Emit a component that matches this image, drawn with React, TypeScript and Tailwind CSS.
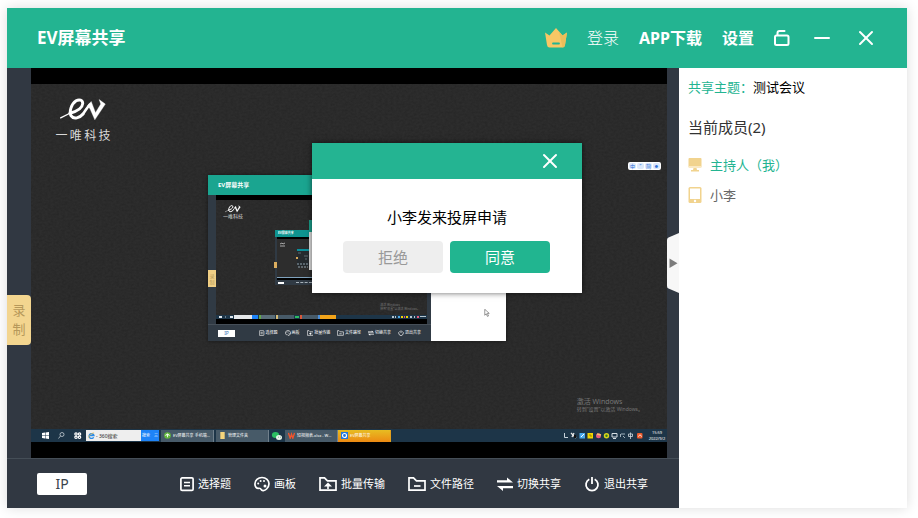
import React from 'react';
import { Minus, X } from 'lucide-react';
import clsx from 'clsx';

interface IconProps {
  className?: string;
}

interface Tool {
  label: string;
  icon: (props: IconProps) => React.ReactElement;
}

const tools: Tool[] = [
  { label: '选择题', icon: QuizIcon },
  { label: '画板', icon: PaletteIcon },
  { label: '批量传输', icon: FolderUpIcon },
  { label: '文件路径', icon: FolderPathIcon },
  { label: '切换共享', icon: SwapIcon },
  { label: '退出共享', icon: PowerIcon },
];

export default function App() {
  return (
    <div className="flex min-h-screen bg-white pt-2 pr-[11px] pb-[10px] pl-[7px] font-['Noto_Sans','Noto_Sans_CJK_SC',sans-serif]">
      <div className="flex min-w-0 flex-1 flex-col shadow-[0_0_12px_rgba(0,0,0,0.14)]">
        <TitleBar />
        <div className="flex flex-1">
          <main className="flex min-w-0 flex-1 flex-col bg-[#313842]">
            <div className="flex flex-1">
              <div className="flex w-6 flex-col">
                <button className="mt-[227px] flex h-[50px] flex-col items-center justify-center rounded-r bg-[#f3d58f] text-[13px] leading-[19px] text-[#b6985a]">
                  <span>录</span>
                  <span>制</span>
                </button>
              </div>
              <SharedScreen />
              <div className="flex w-3 flex-col">
                <button aria-label="收起成员列表" className="mt-[165px] h-[60px] w-3">
                  <svg viewBox="0 0 12 60" className="h-full w-full">
                    <path d="M12 0v60L1.500 55.500Q0 55 0 53V7Q0 5 1.500 4.500z" fill="#f7f7f7" />
                    <path d="M2.500 25.500v9.500l8-4.750z" fill="#7c7c7c" />
                  </svg>
                </button>
              </div>
            </div>
            <Toolbar />
          </main>
          <Members />
        </div>
      </div>
    </div>
  );
}

function TitleBar() {
  return (
    <header className="flex h-[60px] items-center justify-between bg-[#23b491] pr-[29px] pl-[30px] text-white">
      <h1 className="text-[17px] leading-6 font-bold">EV屏幕共享</h1>
      <nav className="flex items-center gap-5 text-base leading-6">
        <CrownIcon className="h-5 w-[22px]" />
        <a href="#login" className="font-light">
          登录
        </a>
        <a href="#app" className="font-bold">
          APP下载
        </a>
        <button className="font-bold">设置</button>
        <button aria-label="锁定">
          <LockIcon className="h-[18px] w-4" />
        </button>
        <button aria-label="最小化" className="flex w-6 justify-center">
          <Minus size={24} strokeWidth={2} />
        </button>
        <button aria-label="关闭" className="flex w-6 justify-center">
          <X size={24} strokeWidth={2} />
        </button>
      </nav>
    </header>
  );
}

function Members() {
  return (
    <aside className="w-[228px] bg-white px-[9px] pt-2 text-[13px] leading-[22px]">
      <p className="text-black">
        <span className="text-[#23b491]">共享主题：</span>
        测试会议
      </p>
      <h2 className="mt-[18px] text-[15px] leading-[22px] text-[#333]">当前成员(2)</h2>
      <ul className="mt-4 space-y-2">
        <li className="flex items-center gap-2 text-[#23b491]">
          <MonitorIcon className="h-4 w-[14px]" />
          主持人（我）
        </li>
        <li className="flex items-center gap-2 text-[#666]">
          <TabletIcon className="h-4 w-[14px]" />
          小李
        </li>
      </ul>
    </aside>
  );
}

function Toolbar() {
  return (
    <footer className="flex h-[50px] items-center justify-between border-t border-[#454e57] pr-[31px] pl-[30px]">
      <button className="h-[22px] w-[50px] rounded-xs bg-white text-sm leading-[22px] text-[#39424c]">
        IP
      </button>
      <div className="flex items-center gap-[23px]">
        {tools.map(({ label, icon: Icon }) => (
          <button key={label} className="flex items-center gap-1 text-[11px] leading-4 text-white">
            <Icon className="h-4" />
            {label}
          </button>
        ))}
      </div>
    </footer>
  );
}

function SharedScreen() {
  return (
    <section className="relative flex min-w-0 flex-1 flex-col bg-black py-4">
      <div className="relative flex-1 overflow-hidden bg-[#2d2d2d]">
        <Grain id="desktop-grain" />
        <div className="relative w-[104px] pt-[14px]">
          <EvLogo className="mx-auto h-6 w-[46px]" />
          <div className="mx-auto mt-[5px] flex w-[55px] justify-between text-xs leading-[18px] text-[#d8d8d8]">
            <span>一</span>
            <span>唯</span>
            <span>科</span>
            <span>技</span>
          </div>
        </div>
        <NestedWindow />
        <ImeBar />
        <div className="absolute right-6 bottom-4 text-[#777]">
          <p className="text-[7px] leading-[9px]">激活 Windows</p>
          <p className="text-[5px] leading-[7px]">转到“设置”以激活 Windows。</p>
        </div>
      </div>
      <Taskbar />
      <RequestDialog />
    </section>
  );
}

function RequestDialog() {
  return (
    <div
      role="dialog"
      aria-label="投屏申请"
      className="absolute top-[75px] left-[281px] w-[270px] bg-white pb-5 shadow-[0_0_6px_rgba(0,0,0,0.6)]"
    >
      <div className="flex h-9 items-center justify-end bg-[#24b492] pr-5 text-white">
        <button aria-label="关闭">
          <X size={24} strokeWidth={2} />
        </button>
      </div>
      <p className="pt-[27px] pb-[13px] text-center text-[15px] leading-[22px] text-black">
        小李发来投屏申请
      </p>
      <div className="flex gap-[7px] pl-[31px] text-[15px] leading-8">
        <button className="h-8 w-[100px] rounded bg-[#eee] text-[#999]">拒绝</button>
        <button className="h-8 w-[100px] rounded bg-[#21b590] text-white">同意</button>
      </div>
    </div>
  );
}

function ImeBar() {
  return (
    <div className="absolute top-[78px] right-[6px] flex h-2 items-center gap-px rounded-xs bg-white px-px text-[5px] leading-[6px] text-[#2f6fd6]">
      {['中', '”', '简', '☻'].map((key) => (
        <span key={key} className="flex h-[6px] w-[7px] items-center justify-center rounded-xs bg-[#dbe8fb]">
          {key}
        </span>
      ))}
    </div>
  );
}

function Taskbar() {
  return (
    <div className="flex h-[13px] items-center bg-[#1d3548] text-[5px] leading-[12px] whitespace-nowrap text-white">
      <svg viewBox="0 0 55 13" className="h-full w-[55px] shrink-0" fill="none">
        <path d="M11 4l3-.4v2.700h-3zM14.500 3.500l3.500-.5v3.300h-3.500zM11 6.800h3v2.700l-3-.4zM14.500 6.800H18v3.300l-3.500-.5z" fill="#fff" />
        <circle cx="31" cy="5.500" r="2" stroke="#c3ccd3" strokeWidth=".8" />
        <path d="M29.500 7L27.500 9.500" stroke="#c3ccd3" strokeWidth=".8" />
        <g stroke="#fff" strokeWidth="1.200">
          <circle cx="45" cy="5" r="1.200" />
          <circle cx="48.500" cy="5" r="1.200" />
          <circle cx="45" cy="8.300" r="1.200" />
          <circle cx="48.500" cy="8.300" r="1.200" />
        </g>
      </svg>
      <div className="flex h-[11px] w-[55px] shrink-0 items-center gap-px bg-[#eee] pl-0.5 text-[#222]">
        <svg viewBox="0 0 8 8" className="size-[7px]" fill="none" stroke="#2b8be6" strokeWidth="1.500">
          <path d="M6.500 6A2.800 2.800 0 1 1 6.800 4H2" />
          <path d="M1 7C0 5 4 1 7 1" stroke="#f0b73a" strokeWidth=".8" />
        </svg>
        <span>- 360搜索</span>
      </div>
      <div className="mr-0.5 flex h-[11px] w-[18px] shrink-0 items-center justify-between bg-[#1e83f7] px-px text-[4px]">
        <span>搜索</span>
        <span>三</span>
      </div>
      <Task label="EV屏幕共享 手机端…" className="border-[#70808c] bg-[#475a68]">
        <circle cx="4" cy="4" r="3.800" fill="#63b83c" />
        <path d="M2 4.500a2 2 0 0 1 4 0M4 2v4" stroke="#fff" fill="none" />
      </Task>
      <Task label="管理文件夹" className="ml-0.5 border-[#70808c] bg-[#475a68]">
        <path d="M1.500 0h5v8h-5z" fill="#f6d57c" />
      </Task>
      <svg viewBox="0 0 16 12" className="h-3 w-4 shrink-0">
        <ellipse cx="6.500" cy="5" rx="3.600" ry="3" fill="#2bbd62" />
        <ellipse cx="10" cy="7.500" rx="3" ry="2.500" fill="#e8f3ea" />
        <path d="M9 7.200h.5M11 7.200h.5" stroke="#2a5d48" />
      </svg>
      <Task label="短视频表.xlsx - W…" className="border-[#70808c] bg-[#475a68]">
        <path d="M.5 1l2 6 1.500-4.500L5.500 7l2-6" fill="none" stroke="#f0532d" strokeWidth="1.600" />
      </Task>
      <Task label="EV屏幕共享" className="border-[#e3a01c] bg-linear-to-b from-[#e7bd22] to-[#ec8912]">
        <path d="M0 0h8v8H0z" fill="#2477dc" />
        <circle cx="4" cy="4" r="2.300" fill="none" stroke="#fff" strokeWidth="1.300" />
      </Task>
      <svg viewBox="0 0 82 13" className="ml-auto h-full w-[82px] shrink-0" fill="none">
        <path d="M1.500 4v4.500H5" stroke="#c7d2da" />
        <path d="M8 4l5 5M9 8l2-4" stroke="#e5e5e5" strokeWidth="1.300" />
        <path d="M11 6h2v3h-2z" fill="#111" />
        <rect x="16.500" y="4" width="5.500" height="5.500" fill="#4aa9ea" />
        <path d="M18 8l3-3" stroke="#fff" />
        <rect x="24.500" y="4" width="5.500" height="5.500" fill="#f2d500" />
        <path d="M27 5v2h2" stroke="#806d00" strokeWidth=".7" />
        <circle cx="35.500" cy="6.800" r="2.500" fill="#e8597e" />
        <path d="M34 5l4 1" stroke="#f5c46b" strokeWidth="1.500" />
        <circle cx="43.500" cy="6.800" r="2.700" fill="#d9d51b" />
        <circle cx="43.500" cy="6.800" r="1.200" fill="#3c7c20" />
        <path d="M49 4.500h5v3.500h-5zM50 9.500h3" stroke="#d5dde3" />
        <path d="M57.500 5v3M59 4v2M60 7l2 2M61 4v2" stroke="#9fb0bb" />
        <path d="M65.500 5h4v2.500h-4zM67.500 3.500V10" stroke="#cfd8de" strokeWidth=".8" />
        <rect x="74" y="4" width="5.500" height="5.500" rx="1" fill="#ec5a2b" />
        <path d="M75.500 7.500c1-2 2-2 3 0" stroke="#fff" />
      </svg>
      <div className="ml-0.5 flex w-5 shrink-0 flex-col items-center text-[4px] leading-[6px]">
        <span>15:59</span>
        <span>2022/9/2</span>
      </div>
    </div>
  );
}

interface TaskProps {
  label: string;
  className: string;
  children: React.ReactNode;
}

function Task({ label, className, children }: TaskProps) {
  return (
    <div className={clsx('flex h-3 w-[53px] shrink-0 items-center gap-0.5 border-r pl-[3px] text-[4px]', className)}>
      <svg viewBox="0 0 8 8" className="size-[7px] shrink-0">
        {children}
      </svg>
      <span>{label}</span>
    </div>
  );
}

// The sharing client as it shows up inside its own capture
function NestedWindow() {
  return (
    <div className="absolute top-[91px] left-[177px] flex h-[166px] w-[298px] flex-col shadow-[0_0_4px_rgba(0,0,0,0.5)]">
      <div className="h-5 shrink-0 bg-[#1aa590] pl-[10px] text-[6px] leading-5 font-bold text-white">
        EV屏幕共享
      </div>
      <div className="flex flex-1">
        <div className="flex flex-1 flex-col bg-[#303a44]">
          <div className="flex flex-1">
            <div className="w-2">
              <div className="mt-[75px] flex h-[17px] flex-col items-center justify-center bg-[#f0cf85] text-[5px] leading-[6px] text-[#b6985a]">
                <span>录</span>
                <span>制</span>
              </div>
            </div>
            <div className="flex flex-1 flex-col bg-black py-[5px]">
              <div className="relative flex-1 overflow-hidden bg-[#2d2d2d]">
                <Grain id="nested-grain" />
                <div className="relative w-[34px] pt-[5px]">
                  <EvLogo className="mx-auto h-2 w-4" />
                  <p className="text-center text-[5px] leading-[7px] text-[#ddd]">一唯科技</p>
                </div>
                <InnerWindow />
                <div className="absolute right-[7px] bottom-1 text-[3px] leading-1 text-[#777]">
                  <p>激活 Windows</p>
                  <p>转到“设置”以激活 Windows。</p>
                </div>
              </div>
              <MiniTaskbar />
            </div>
            <div className="w-1" />
          </div>
          <div className="flex h-[17px] items-center justify-between border-t border-[#454e57] pr-[10px] pl-[10px]">
            <span className="h-[7px] w-[17px] bg-white text-center text-[5px] leading-[7px] text-[#3a78b5]">
              IP
            </span>
            <div className="flex gap-[7px]">
              {tools.map(({ label, icon: Icon }) => (
                <span key={label} className="flex items-center gap-px text-[4px] leading-[6px] text-white">
                  <Icon className="h-[6px]" />
                  {label}
                </span>
              ))}
            </div>
          </div>
        </div>
        <div className="relative w-[75px] bg-white">
          <svg viewBox="0 0 8 10" className="absolute right-4 bottom-6 h-2 w-[6px]">
            <path d="M1 0v8l2-2 1.500 3.500L6 9 4.500 5.500H7z" fill="#fff" stroke="#555" strokeWidth=".8" />
          </svg>
        </div>
      </div>
    </div>
  );
}

function MiniTaskbar() {
  return (
    <div className="flex h-1 bg-[#1d3548]">
      <svg viewBox="0 0 18 4" className="h-1 w-[18px]">
        <path d="M3 1h3v2H3zM14 1h3v2h-3z" fill="#dfe6ea" />
        <path d="M9 1h1v2H9z" fill="#6c7e8b" />
      </svg>
      <div className="w-[18px] bg-[#e6e8ea]" />
      <div className="mr-px w-[6px] bg-[#1e83f7]" />
      <div className="mr-px w-4 border-l-2 border-[#63a849] bg-[#5a6d79]" />
      <div className="w-[18px] border-l-2 border-[#d8bd78] bg-[#475a68]" />
      <div className="m-px w-1 bg-[#2bbd62]" />
      <div className="w-[18px] border-l-2 border-[#d9583a] bg-[#475a68]" />
      <div className="w-[18px] border-l-2 border-[#4b8fdc] bg-[#f2a41a]" />
      <svg viewBox="0 0 36 4" className="ml-auto h-1 w-9">
        <path d="M1 1h2v2H1zM4 1h1v2H4zM19 1h2v2h-2zM23 1h1v2h-1zM29 1h6v1h-6z" fill="#b7c5ce" />
        <path d="M7 1h2v2H7z" fill="#4aa9ea" />
        <path d="M10 1h2v2h-2zM15 1h2v2h-2z" fill="#f2d500" />
        <path d="M13 1h1v2h-1zM26 1h2v2h-2z" fill="#e8597e" />
      </svg>
    </div>
  );
}

function InnerWindow() {
  return (
    <>
      <div className="absolute top-[30px] left-[59px] flex h-[55px] w-[100px] flex-col bg-[#303a44]">
        <div className="h-[7px] bg-[#0f9490] pl-[3px] text-[3px] leading-[7px] font-bold text-white">
          EV屏幕共享
        </div>
        <div className="ml-0.5 flex flex-1 flex-col border-t-2 border-black bg-[#2d2d2d]">
          <svg viewBox="0 0 60 38" className="h-[38px] w-[60px]">
            <path d="M3 5l2-1 1 1 2-1M3 7h5" stroke="#c9c9c9" strokeWidth=".8" fill="none" />
            <path d="M20 10h12v2H20z" fill="#0b8f9a" />
            <path d="M20 12h12v15H20z" fill="#252a2e" />
            <path d="M21 14h3M27 17h4M28 20h2" stroke="#6d7b83" strokeWidth=".8" />
            <path d="M19 18h2v2h-2z" fill="#d9a95a" />
            <path d="M20 25h12M21 28h10" stroke="#91a3ae" strokeWidth="1" strokeDasharray="2 1" />
          </svg>
          <div className="h-px bg-[#7fa2bd]" />
          <div className="h-0.5 bg-black" />
        </div>
        <div className="flex h-[5px] items-center gap-3 pl-[3px]">
          <span className="h-0.5 w-[6px] bg-white" />
          <span className="h-px w-4 border-t border-dashed border-[#a7b1b9]" />
        </div>
      </div>
      <div className="absolute top-[62px] left-[58px] h-[6px] w-[3px] bg-[#dcae60]" />
      <div className="absolute top-5 left-[93px] h-[50px] w-[90px] border-t-12 border-[#1aa08c] bg-[#e2e2e2]" />
    </>
  );
}

function Grain({ id }: { id: string }) {
  return (
    <svg className="absolute inset-0 h-full w-full opacity-15" aria-hidden="true">
      <filter id={id}>
        <feTurbulence type="fractalNoise" baseFrequency="0.35 0.5" numOctaves="3" seed="4" />
        <feColorMatrix values="0 0 0 0 0  0 0 0 0 0  0 0 0 0 0  1.600 0 0 0 -0.500" />
      </filter>
      <rect width="100%" height="100%" filter={`url(#${id})`} />
    </svg>
  );
}

function EvLogo({ className }: IconProps) {
  return (
    <svg viewBox="0 0 140 72" className={className} fill="none" stroke="#fff" strokeLinecap="round" strokeLinejoin="round">
      <path d="M2 60L30 46" strokeWidth="4" />
      <path d="M30 46C52 40 68 30 69 17C70 5 58 3 49 8C34 18 27 42 34 54C42 66 60 60 70 48" strokeWidth="9" />
      <path d="M70 48C77 39 83 28 90 20" strokeWidth="8" />
      <path d="M84 22L95 10L108 44L124 18L119 4L138 18L106 66L92 34z" fill="#fff" strokeWidth="1" />
    </svg>
  );
}

function CrownIcon({ className }: IconProps) {
  return (
    <svg viewBox="0 0 22 20" className={className}>
      <path d="M0 4.500l4.500 3L11 0l6.500 7.500 4.500-3-2 12.500q-.4 2.500-2.500 2.500h-13Q2.400 19.500 2 17z" fill="#f8c765" />
      <path d="M14 3.500l3.500 4 4.500-3-2 12.500q-.4 2.500-2.500 2.500z" fill="#ebbe5a" />
      <path d="M8 15.500h6" stroke="#23b491" strokeWidth="1.800" strokeLinecap="round" />
    </svg>
  );
}

function LockIcon({ className }: IconProps) {
  return (
    <svg viewBox="0 0 16 18" className={className} fill="none" stroke="#fff" strokeWidth="2" strokeLinecap="round">
      <rect x="1" y="6.500" width="13.500" height="9.500" rx="1.500" />
      <path d="M3.500 6V4Q3.500 2 5.500 2h5" />
    </svg>
  );
}

function MonitorIcon({ className }: IconProps) {
  return (
    <svg viewBox="0 0 14 16" className={className}>
      <rect x=".5" y="1" width="13" height="9.500" rx="1" fill="#f1d38e" />
      <path d="M.5 9h13v1.500H.5z" fill="#fae9c2" />
      <path d="M5.500 11h3l.5 2h2v1.500H3V13h2z" fill="#f1d38e" />
    </svg>
  );
}

function TabletIcon({ className }: IconProps) {
  return (
    <svg viewBox="0 0 14 16" className={className}>
      <rect x=".5" width="13" height="16" rx="1.500" fill="#f1d38e" />
      <path d="M2 1.500h10v10.500H2z" fill="#fff" />
      <circle cx="7" cy="14" r="1.200" fill="#fff" />
    </svg>
  );
}

function QuizIcon({ className }: IconProps) {
  return (
    <svg viewBox="0 0 14 16" className={className} fill="none" stroke="#fff" strokeWidth="1.700">
      <rect x=".9" y="1.900" width="12.200" height="12.500" rx="1.200" />
      <path d="M4 6.500h6M4 9.800h6" strokeWidth="1.500" />
    </svg>
  );
}

function PaletteIcon({ className }: IconProps) {
  return (
    <svg viewBox="0 0 16 16" className={className} fill="none" stroke="#fff" strokeWidth="1.700">
      <path d="M8 1.500C4 1.500.9 4.400.9 8c0 3 1.800 4.500 3.600 4.300 1.700-.2 2.300.2 2.600 1.100.7 1.800 3.500 1.500 5.500-.4 1.500-1.400 2.400-3 2.400-5.200C15 4.200 12 1.500 8 1.500z" />
      <g fill="#fff" stroke="none">
        <circle cx="4.200" cy="7.500" r="1" />
        <circle cx="6.600" cy="5" r="1" />
        <circle cx="10" cy="5" r="1" />
        <circle cx="11" cy="10" r="1.500" />
      </g>
    </svg>
  );
}

function FolderUpIcon({ className }: IconProps) {
  return (
    <svg viewBox="0 0 18 16" className={className} fill="none" stroke="#fff" strokeWidth="1.700">
      <path d="M1 14.200V1.800h4.500l3 3H17v9.400z" />
      <path d="M9 6.500l4 4H9.800v2.500H8.200v-2.500H5z" fill="#fff" stroke="none" />
    </svg>
  );
}

function FolderPathIcon({ className }: IconProps) {
  return (
    <svg viewBox="0 0 18 16" className={className} fill="none" stroke="#fff" strokeWidth="1.700">
      <path d="M1 14.200V1.800h4.500l3 3H17v9.400z" />
      <path d="M6 10h6.500" />
    </svg>
  );
}

function SwapIcon({ className }: IconProps) {
  return (
    <svg viewBox="0 0 16 16" className={className} fill="#fff">
      <path d="M0 4.300h10V1.500l6 5H0zM16 12.200H6V15L0 10h16z" />
    </svg>
  );
}

function PowerIcon({ className }: IconProps) {
  return (
    <svg viewBox="-1 0 16 16" className={className} fill="none" stroke="#fff" strokeWidth="1.800">
      <path d="M4.300 3.300a6 6 0 1 0 5.400 0M7 1v7" />
    </svg>
  );
}
